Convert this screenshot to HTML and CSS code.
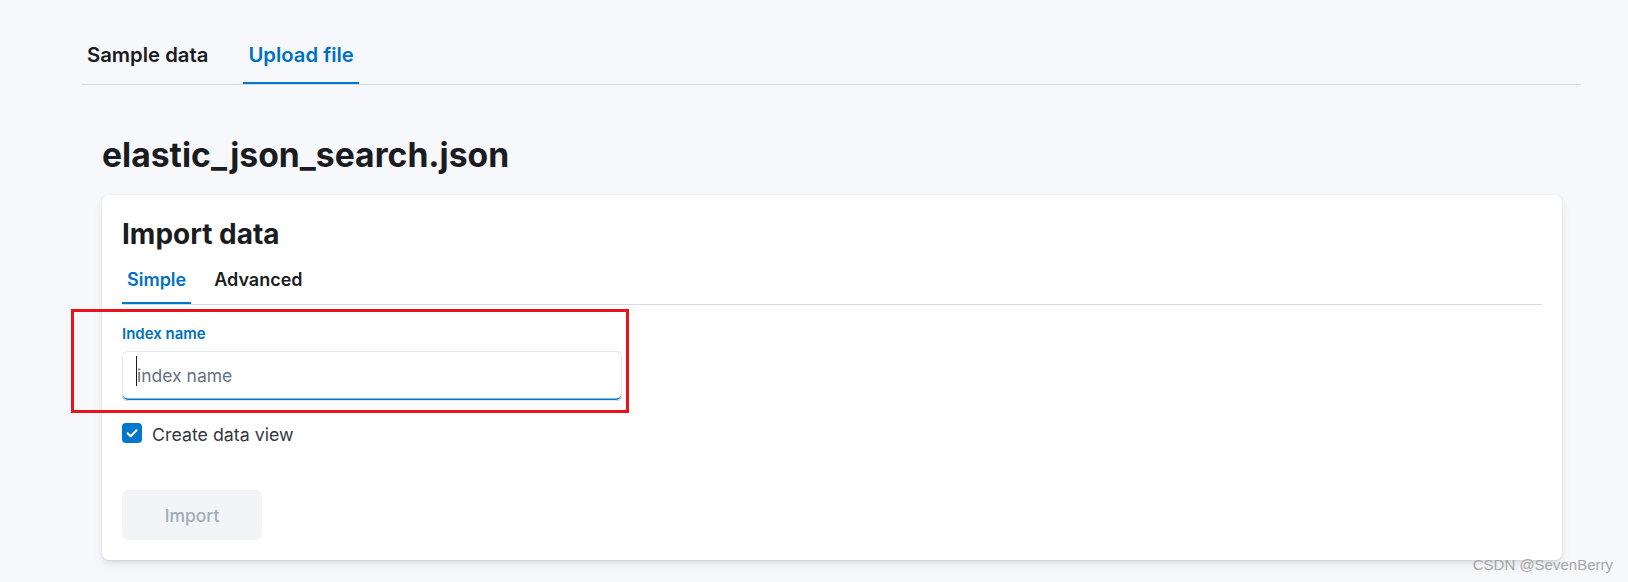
FILE: index.html
```html
<!DOCTYPE html>
<html lang="en">
<head>
<meta charset="utf-8">
<title>Upload file</title>
<link rel="stylesheet" href="styles.css">
</head>
<body>
<div class="page">
  <nav class="tabs">
    <div class="tab">Sample data</div>
    <div class="tab selected">Upload file</div>
  </nav>
  <main class="content">
    <h1 class="title">elastic_json_search.json</h1>
    <section class="panel">
      <h2 class="panel-title">Import data</h2>
      <div class="subtabs">
        <div class="subtab selected">Simple</div>
        <div class="subtab">Advanced</div>
      </div>
      <div class="form">
        <label class="label" for="idx">Index name</label>
        <div class="field">
          <span class="caret"></span>
          <input id="idx" class="input" type="text" placeholder="index name">
        </div>
        <div class="checkrow">
          <span class="checkbox">
            <svg width="20" height="20" viewBox="0 0 20 20"><polyline points="5.6,10.2 8.7,13.2 14.4,7.2" fill="none" stroke="#fff" stroke-width="2" stroke-linecap="round" stroke-linejoin="round"/></svg>
          </span>
          <span class="checklabel">Create data view</span>
        </div>
        <button class="import" type="button" disabled>Import</button>
      </div>
    </section>
  </main>
  <div class="annotation"></div>
  <div class="watermark">CSDN @SevenBerry</div>
</div>
</body>
</html>
```

FILE: styles.css
```css
* { box-sizing: border-box; }
html, body { margin: 0; padding: 0; }
body {
  background: #f7f8fc;
  font-family: Inter, "Noto Sans", "Liberation Sans", sans-serif;
  color: #1a1c21;
  width: 1628px;
  height: 582px;
  overflow: hidden;
}
.page {
  position: relative;
  height: 582px;
  padding-top: 24px;
}
.tabs {
  display: flex;
  gap: 30px;
  margin: 0 47px 0 82px;
  border-bottom: 1px solid #d3dae6;
}
.tab {
  position: relative;
  height: 60px;
  padding: 0 5px;
  display: flex;
  align-items: center;
  font-size: 20.3px;
  font-weight: 600;
  color: #1a1c21;
}
.tab.selected { color: #0071c2; }
.tab.selected::after,
.subtab.selected::after {
  content: "";
  position: absolute;
  left: 0;
  right: 0;
  bottom: 0;
  height: 2px;
  background: #0077cc;
}
.content {
  padding: 0 66px 0 102px;
}
.title {
  margin: 50px 0 20px;
  font-size: 33.7px;
  line-height: 40px;
  font-weight: 700;
  color: #1a1c21;
}
.panel {
  background: #fff;
  border-radius: 7px;
  padding: 20px;
  box-shadow: 0 0.9px 1.8px rgba(0,0,0,0.07), 0 2.4px 5px rgba(0,0,0,0.05), 0 5.6px 12px rgba(0,0,0,0.05);
}
.panel-title {
  margin: 0;
  font-size: 28px;
  line-height: 38px;
  font-weight: 700;
  color: #1a1c21;
}
.subtabs {
  display: flex;
  gap: 18px;
  margin-top: 1px;
  border-bottom: 1px solid #d3dae6;
}
.subtab {
  position: relative;
  height: 50px;
  padding: 0 5px;
  display: flex;
  align-items: center;
  font-size: 18px;
  font-weight: 600;
  color: #1a1c21;
}
.subtab.selected { color: #0071c2; padding: 0 5px 0 5px; }
.form {
  padding-top: 19px;
  display: flex;
  flex-direction: column;
  align-items: flex-start;
}
.label {
  font-size: 15px;
  line-height: 20px;
  font-weight: 600;
  color: #0071c2;
  margin-bottom: 7px;
}
.field {
  position: relative;
  width: 500px;
  height: 50px;
}
.input {
  width: 100%;
  height: 50px;
  border: none;
  outline: none;
  border-radius: 6px;
  background: #fff;
  box-shadow: inset 0 0 0 1px #e3e7ef, inset 0 -2.5px 0 #0077cc;
  padding: 0 15px 1px 15px;
  font-family: Inter, "Noto Sans", "Liberation Sans", sans-serif;
  font-size: 17.5px;
  color: #343741;
}
.input::placeholder { color: #69707d; opacity: 1; }
.caret {
  position: absolute;
  left: 14px;
  top: 5px;
  width: 1px;
  height: 30px;
  background: #1a1c21;
  z-index: 1;
}
.checkrow {
  margin-top: 20px;
  height: 24px;
  display: flex;
  align-items: center;
  gap: 10px;
}
.checkbox {
  width: 20px;
  height: 20px;
  border-radius: 4px;
  background: #0077cc;
  display: flex;
}
.checklabel {
  font-size: 17.8px;
  line-height: 24px;
  padding-top: 4px;
  color: #343741;
}
.import {
  margin-top: 45px;
  width: 140px;
  height: 50px;
  border: none;
  border-radius: 6px;
  background: #f2f4f8;
  color: #a2abba;
  font-family: Inter, "Noto Sans", "Liberation Sans", sans-serif;
  font-size: 17.5px;
  font-weight: 500;
}
.annotation {
  position: absolute;
  left: 71px;
  top: 309px;
  width: 558px;
  height: 104px;
  border: 3px solid #e8141c;
}
.watermark {
  position: absolute;
  right: 15px;
  top: 556px;
  font-family: "Liberation Sans", Arial, sans-serif;
  font-size: 15px;
  line-height: 18px;
  color: #a6a6a6;
}
```
